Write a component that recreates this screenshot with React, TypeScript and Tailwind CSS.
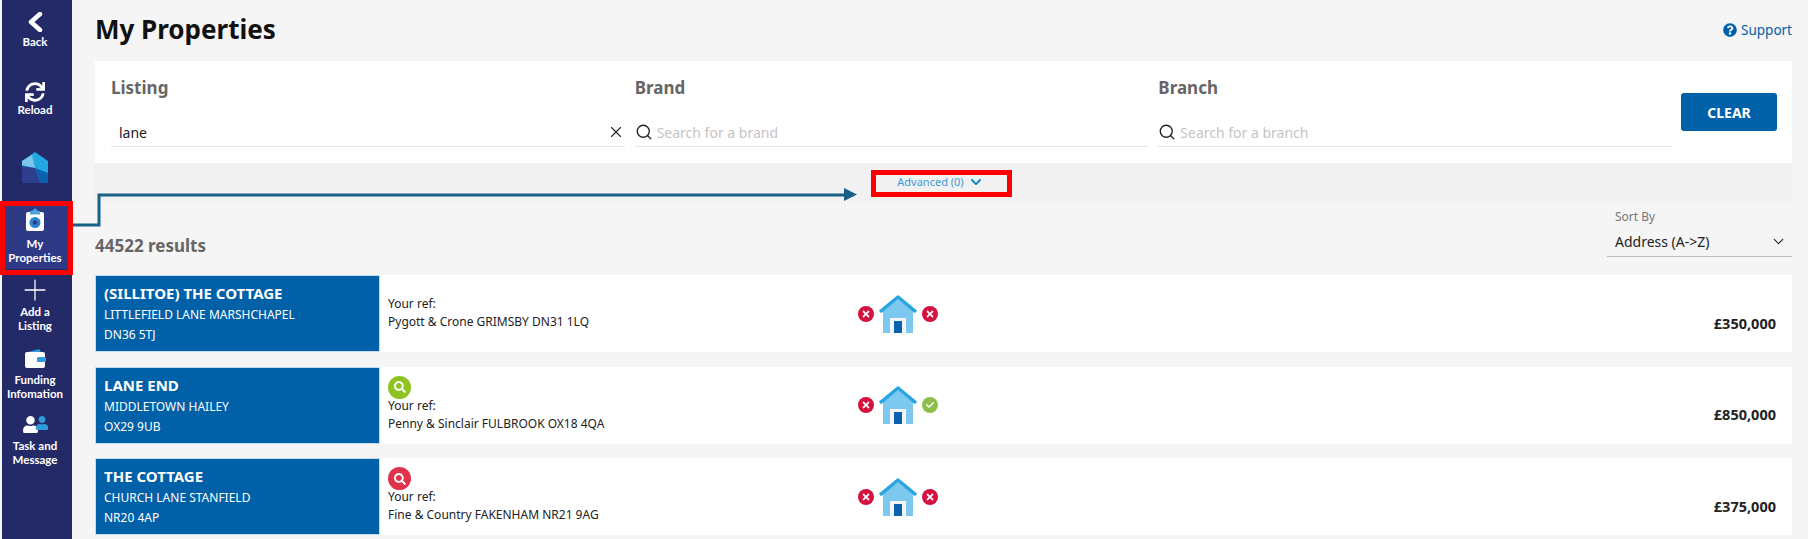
import { ChevronDown, Plus, Search, X } from "lucide-react";
import { FaCheck, FaChevronDown, FaQuestionCircle, FaSearch, FaSync, FaTimes, FaUser } from "react-icons/fa";

const listings = [
    {
        title: "(SILLITOE) THE COTTAGE",
        street: "LITTLEFIELD LANE MARSHCHAPEL",
        postcode: "DN36 5TJ",
        agent: "Pygott & Crone GRIMSBY DN31 1LQ",
        status: null,
        ok: false,
        price: "£350,000",
    },
    {
        title: "LANE END",
        street: "MIDDLETOWN HAILEY",
        postcode: "OX29 9UB",
        agent: "Penny & Sinclair FULBROOK OX18 4QA",
        status: "green",
        ok: true,
        price: "£850,000",
    },
    {
        title: "THE COTTAGE",
        street: "CHURCH LANE STANFIELD",
        postcode: "NR20 4AP",
        agent: "Fine & Country FAKENHAM NR21 9AG",
        status: "red",
        ok: false,
        price: "£375,000",
    },
];

function BackIcon() {
    return (
        <svg width="16" height="20" viewBox="0 0 16 20">
            <path d="M13 2 4 10 13 18" fill="none" stroke="#fff" strokeWidth="4.5" strokeLinecap="round" strokeLinejoin="round" />
        </svg>
    );
}

function Logo() {
    return (
        <svg width="26" height="31" viewBox="0 0 26 31">
            <path d="M13 0 26 9V31H0V9Z" fill="#22a7e0" />
            <path d="M0 9 10 3 13 16 0 13Z" fill="#7cc8ea" />
            <path d="M0 14 13 16 19 31H0Z" fill="#2f3f8f" />
            <path d="M13 16 26 21V31H19Z" fill="#0a62ae" />
        </svg>
    );
}

function ClipboardIcon() {
    return (
        <svg width="18" height="23" viewBox="0 0 18 23">
            <rect x="0" y="4" width="18" height="19" rx="2" fill="#fff" />
            <path d="M6 3 9 0 12 3H14V6.5H4V3Z" fill="#4ea3dd" />
            <circle cx="9" cy="14.5" r="5.5" fill="#2a85cc" />
            <circle cx="9" cy="14.5" r="2.2" fill="#2f3a86" />
        </svg>
    );
}

function WalletIcon() {
    return (
        <svg width="21" height="19" viewBox="0 0 21 19">
            <path d="M3 3 14 0 16 3Z" fill="#2f9bdc" />
            <rect x="0" y="3" width="20" height="16" rx="2" fill="#fff" />
            <rect x="12" y="8" width="9" height="5" rx="1" fill="#2f9bdc" />
        </svg>
    );
}

function HouseIcon() {
    return (
        <svg width="38" height="38" viewBox="0 0 38 38">
            <path d="M4 16 19 4 34 16V38H4Z" fill="#7cc8ee" />
            <path d="M1 17 19 2 37 17" fill="none" stroke="#2aa5e2" strokeWidth="3.5" strokeLinejoin="round" />
            <rect x="11" y="23" width="16" height="15" fill="#f2f6f8" />
            <rect x="15" y="26" width="8" height="12" fill="#0a62ae" />
        </svg>
    );
}

function NavItem({ icon, lines, iconGap }: { icon: React.ReactNode; lines: string[]; iconGap: string }) {
    return (
        <div className="flex flex-col items-center pr-[4px] font-['Lato',sans-serif] text-[11.5px] leading-[14px] font-bold text-white">
            <div className={`flex justify-center ${iconGap}`}>{icon}</div>
            {lines.map((line) => (
                <span key={line}>{line}</span>
            ))}
        </div>
    );
}

function FilterField({ label, value, placeholder }: { label: string; value?: string; placeholder?: string }) {
    return (
        <div>
            <div className="h-[38px] text-[17px] leading-[24px] font-bold text-[#666]">{label}</div>
            <div className="flex h-[33px] items-center border-b border-[#e3e3e3] pt-[4px] text-[14px]">
                {value ? (
                    <>
                        <span className="flex-1 pl-2 text-[#222]">{value}</span>
                        <X className="h-[18px] w-[18px] text-[#222]" strokeWidth={1.5} />
                    </>
                ) : (
                    <>
                        <Search className="h-[18px] w-[18px] text-[#222]" strokeWidth={1.75} />
                        <span className="pl-[4px] text-[#c4c4c4]">{placeholder}</span>
                    </>
                )}
            </div>
        </div>
    );
}

function Badge({ ok }: { ok: boolean }) {
    return (
        <span className={`flex h-4 w-4 items-center justify-center rounded-full text-white ${ok ? "bg-[#8fbf4a]" : "bg-[#d5123f]"}`}>
            {ok ? <FaCheck className="h-2 w-2" /> : <FaTimes className="h-2.5 w-2.5" />}
        </span>
    );
}

export default function App() {
    return (
        <div className="relative flex h-[539px] w-[1808px] overflow-hidden bg-[#f5f5f5] font-['Noto_Sans',sans-serif]">
            <aside className="ml-[2px] flex w-[70px] shrink-0 flex-col bg-[#242a68]">
                <div className="mt-[12px]">
                    <NavItem iconGap="mb-[3px]" icon={<BackIcon />} lines={["Back"]} />
                </div>
                <div className="mt-[33px]">
                    <NavItem iconGap="mb-[1px]" icon={<FaSync className="h-[20px] w-[20px]" />} lines={["Reload"]} />
                </div>
                <div className="mt-[35px] flex justify-center pr-[4px]">
                    <Logo />
                </div>
                <div className="mt-[23px] h-[63px] bg-[#2f3a86] pt-[2px]">
                    <NavItem iconGap="mb-[6px]" icon={<ClipboardIcon />} lines={["My", "Properties"]} />
                </div>
                <div className="mt-[11px]">
                    <NavItem iconGap="mb-[5px]" icon={<Plus className="-my-[7px] h-[34px] w-[34px]" strokeWidth={0.9} />} lines={["Add a", "Listing"]} />
                </div>
                <div className="mt-[16px]">
                    <NavItem iconGap="mb-[5px]" icon={<WalletIcon />} lines={["Funding", "Infomation"]} />
                </div>
                <div className="mt-[15px]">
                    <NavItem
                        iconGap="mb-[6px]"
                        icon={
                            <span className="flex items-end">
                                <FaUser className="h-[17px] w-[17px]" />
                                <FaUser className="-ml-1 mb-[3px] h-[14px] w-[14px] text-[#2f9bdc]" />
                            </span>
                        }
                        lines={["Task and", "Message"]}
                    />
                </div>
            </aside>

            <main className="flex min-w-0 flex-1 flex-col pl-[23px] pr-[16px]">
                <header className="flex h-[61px] items-start justify-between">
                    <h1 className="mt-[8px] text-[26px] leading-[42px] font-bold text-[#111]">My Properties</h1>
                    <a className="mt-[20px] flex items-center gap-[4px] text-[13.5px] leading-[20px] text-[#0060a8]">
                        <FaQuestionCircle className="h-[14px] w-[14px]" />
                        Support
                    </a>
                </header>

                <section className="flex h-[102px] bg-white pl-[16px] pr-[15px] pt-[15px]">
                    <div className="grid flex-1 grid-cols-3 gap-[10px]">
                        <FilterField label="Listing" value="lane" />
                        <FilterField label="Brand" placeholder="Search for a brand" />
                        <FilterField label="Branch" placeholder="Search for a branch" />
                    </div>
                    <button className="mt-[17px] ml-[9px] h-[38px] w-[96px] rounded-[3px] bg-[#0060a8] text-[14px] font-bold text-white">CLEAR</button>
                </section>

                <div className="flex h-[38px] items-center justify-center gap-[6px] bg-[#f1f1f1] pr-[8px] text-[11px] text-[#3d9ad6]">
                    Advanced (0)
                    <FaChevronDown className="h-[12px] w-[12px] text-[#0a86cf]" />
                </div>

                <div className="flex h-[74px] items-end justify-between pb-[18px]">
                    <span className="text-[17px] leading-[22px] font-bold text-[#666]">44522 results</span>
                    <div className="w-[185px] border-b border-[#bbb]">
                        <div className="pl-[8px] text-[12px] leading-[18px] text-[#777]">Sort By</div>
                        <div className="flex h-[30px] items-center justify-between pl-[8px] pr-[5px] text-[14px] text-[#222]">
                            Address (A-&gt;Z)
                            <ChevronDown className="h-[17px] w-[17px]" strokeWidth={1.5} />
                        </div>
                    </div>
                </div>

                <div className="flex flex-col gap-[14.5px]">
                    {listings.map((item) => (
                        <article key={item.title} className="flex h-[77px] bg-white">
                            <div className="flex w-[285px] shrink-0 flex-col border border-[#c4dcee] bg-[#0060a8] pl-[8px] pt-[5px] text-white">
                                <span className="text-[15px] leading-[24px] font-bold">{item.title}</span>
                                <span className="text-[12px] leading-[20px]">{item.street}</span>
                                <span className="text-[12px] leading-[20px]">{item.postcode}</span>
                            </div>
                            <div className="flex w-[478px] shrink-0 flex-col justify-center pb-[2px] pl-[8px] text-[12px] leading-[18px] text-[#222]">
                                {item.status && (
                                    <span className={`-mb-[2px] flex h-[23px] w-[23px] items-center justify-center rounded-full text-white ${item.status === "green" ? "bg-[#8fc31f]" : "bg-[#e0324b]"}`}>
                                        <FaSearch className="h-[12px] w-[12px]" />
                                    </span>
                                )}
                                <span>Your ref:</span>
                                <span>{item.agent}</span>
                            </div>
                            <div className="flex items-center gap-[5px]">
                                <Badge ok={false} />
                                <HouseIcon />
                                <Badge ok={item.ok} />
                            </div>
                            <div className="flex flex-1 items-center justify-end pr-[16px] pt-[20px] text-[14.5px] font-bold text-[#222]">{item.price}</div>
                        </article>
                    ))}
                </div>
            </main>

            {/* annotation overlays drawn on top of the screenshot */}
            <div className="pointer-events-none absolute left-0 top-[201px] h-[74px] w-[73px] border-[5px] border-[#ff0000]" />
            <div className="pointer-events-none absolute left-[871px] top-[170px] h-[27px] w-[141px] border-[5px] border-[#ff0000]" />
            <svg className="pointer-events-none absolute left-[72px] top-[185px]" width="800" height="50" viewBox="0 0 800 50">
                <path d="M1 40H27V10H775" fill="none" stroke="#1a5f85" strokeWidth="3" />
                <path d="M772 3 785 9.5 772 16Z" fill="#1a5f85" />
            </svg>
        </div>
    );
}
